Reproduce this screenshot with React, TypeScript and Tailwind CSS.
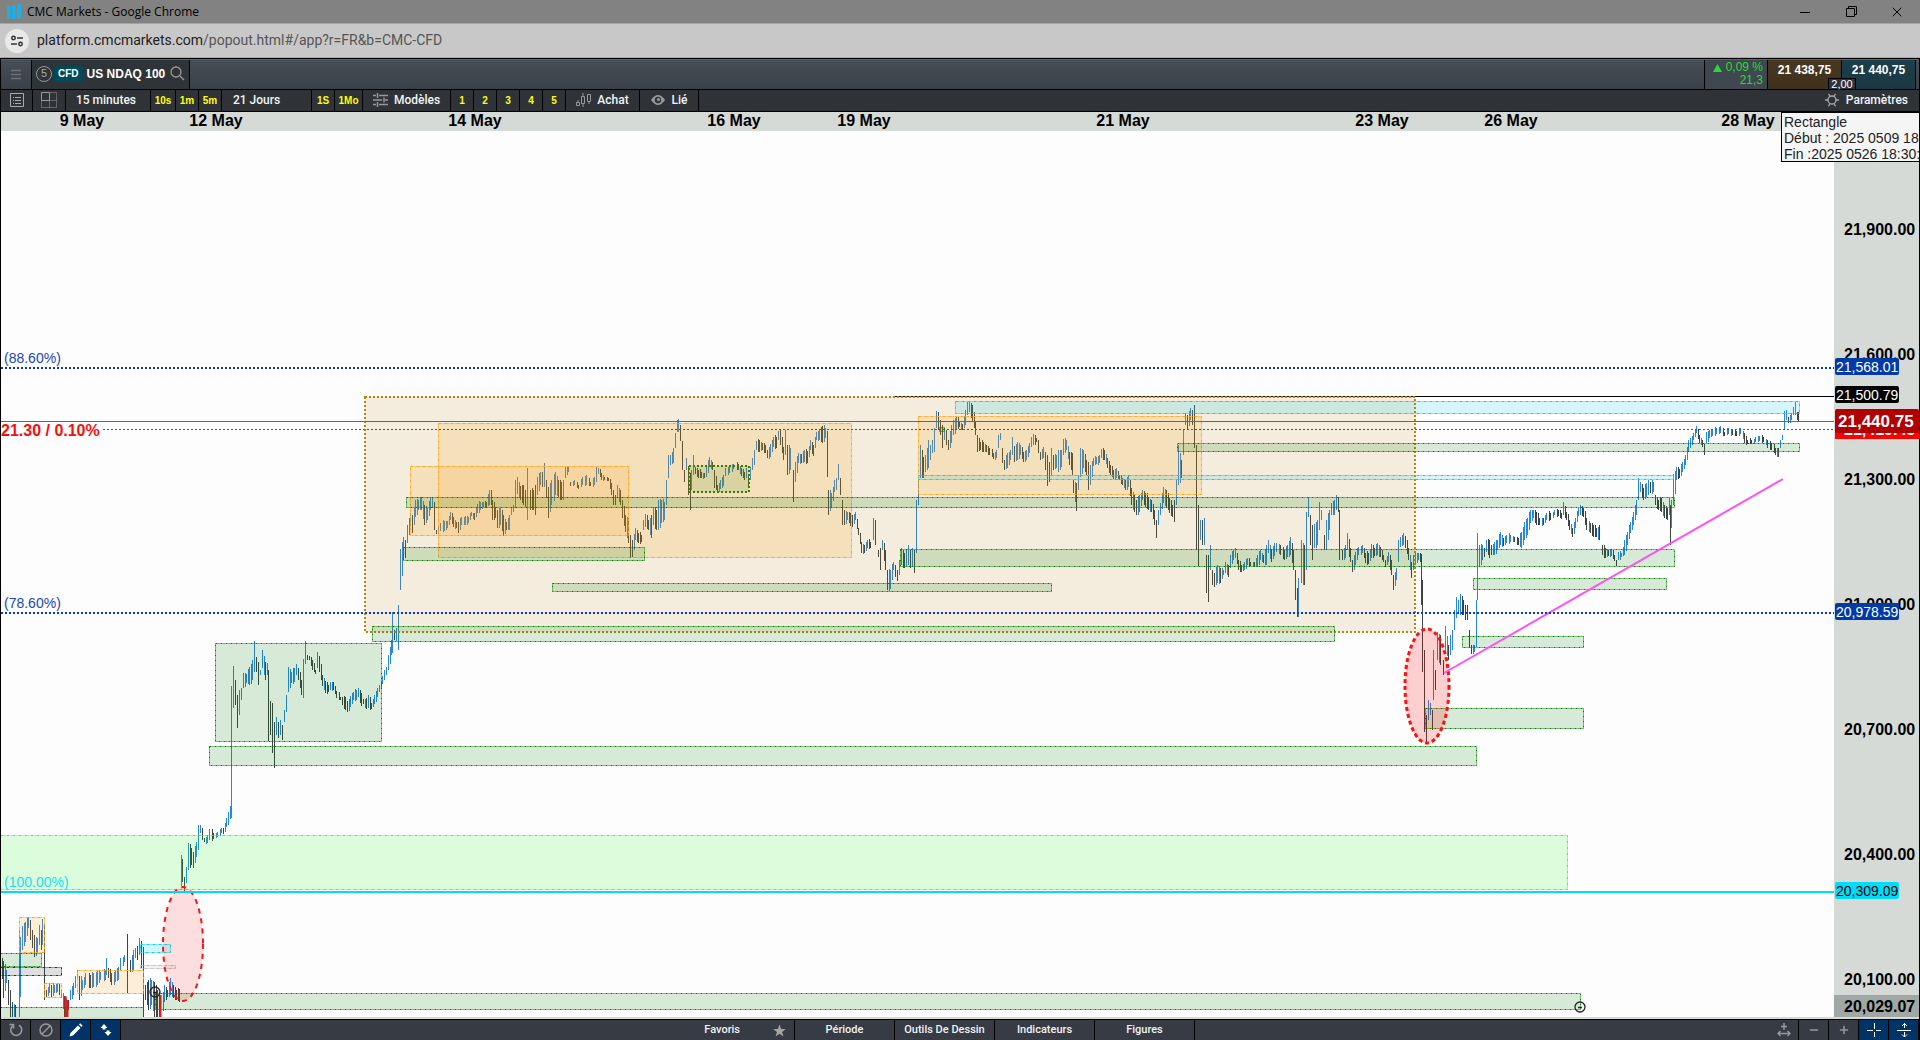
import type { ReactNode } from "react";
import { Minus, Plus, X } from "lucide-react";
import clsx from "clsx";

export default function App() {
  return (
    <div className="flex h-screen min-h-[600px] flex-col overflow-hidden bg-black font-['Liberation_Sans',Arial,sans-serif]">
      <TitleBar />
      <AddressBar />
      <main className="flex min-h-0 flex-1 flex-col border-t border-black px-px">
        <ProductHeader />
        <ChartToolbar />
        <section className="relative flex min-h-0 flex-1 bg-[#fdfdfd]">
          <Plot />
          <PriceAxis />
          <div className="absolute right-0 top-0 h-[50px] w-[138px] overflow-hidden whitespace-nowrap border border-r-0 border-black bg-[#f5f5f5] pl-[2px] pt-px text-[14px] leading-[16px] text-[#222]">
            <div>Rectangle</div>
            <div>Début : 2025 0509 18:30:00</div>
            <div>Fin :2025 0526 18:30:00</div>
          </div>
        </section>
        <BottomBar />
      </main>
    </div>
  );
}

function TitleBar() {
  return (
    <header className="flex h-6 shrink-0 items-center border-b border-[#a5a5a5] bg-[#828282] pl-[7px] text-black">
      <svg width="14" height="16" viewBox="0 0 14 16" fill="#1ab0e8">
        <path d="M0 1.5 3.500 2.500v12H0zM5 1.500 8.500 1v14H5zM10 0.500 14 0v14l-4 1z" />
      </svg>
      <h1 className="ml-[6px] flex-1 font-['Open_Sans',sans-serif] text-[12px]">CMC Markets - Google Chrome</h1>
      <button aria-label="Réduire" className="flex h-full w-[46px] items-center justify-center">
        <svg width="10" height="10" stroke="currentColor">
          <path d="M0 5.5h10" />
        </svg>
      </button>
      <button aria-label="Restaurer" className="flex h-full w-[46px] items-center justify-center">
        <svg width="11" height="11" fill="none" stroke="currentColor">
          <path d="M0.5 2.5h8v8h-8zM2.5 2.5v-2h8v8h-2" />
        </svg>
      </button>
      <button aria-label="Fermer" className="flex h-full w-[46px] items-center justify-center">
        <X size={16} strokeWidth={1.5} />
      </button>
    </header>
  );
}

function AddressBar() {
  return (
    <div className="flex h-[34px] shrink-0 items-center border-b border-[#aaa] bg-[#c8c8c8] pl-[5px]">
      <span className="flex h-6 w-6 items-center justify-center rounded-full bg-[#e9e9e9]">
        <svg width="12" height="12" fill="none" stroke="#333" strokeWidth="1.5">
          <circle cx="2.5" cy="3" r="1.7" />
          <path d="M6 3h6M0 9h6" />
          <circle cx="9.5" cy="9" r="1.7" />
        </svg>
      </span>
      <div className="ml-2 font-[Roboto,sans-serif] text-[14px] text-[#555]">
        <span className="text-[#222]">platform.cmcmarkets.com</span>/popout.html#/app?r=FR&b=CMC-CFD
      </div>
    </div>
  );
}

function ProductHeader() {
  return (
    <div className="flex h-[30px] shrink-0 border-t border-[#5b656f] bg-gradient-to-b from-[#464e57] to-[#3a4048] text-[12px]">
      <button aria-label="Menu" className="flex w-[31px] items-center justify-center border-r border-black">
        <svg width="10" height="11" stroke="#6b7279" strokeWidth="1.5">
          <path d="M0 1.5h10M0 5.5h10M0 9.5h10" />
        </svg>
      </button>
      <div className="flex w-[158px] items-center border-r border-black bg-[#2f3438] pb-[2px] pl-1 font-bold text-white">
        <span className="flex h-4 w-4 items-center justify-center rounded-full border border-[#999] text-[11px] font-normal text-[#aaa]">
          5
        </span>
        <span className="ml-[2px] rounded-[3px] bg-[#004b57] px-1 text-[10px] leading-4">CFD</span>
        <span className="ml-1">US NDAQ 100</span>
        <button aria-label="Rechercher" className="ml-[5px]">
          <svg width="15" height="15" fill="none" stroke="#999" strokeWidth="1.3">
            <circle cx="6" cy="6" r="5" />
            <path d="M10 10l4 4" />
          </svg>
        </button>
      </div>
      <div className="flex-1" />
      <div className="w-[64px] border-x border-black bg-[#40474f] pr-1 text-right leading-[13px] text-[#22dd3a]">
        <div className="flex items-center justify-end gap-1 pt-px">
          <svg width="9" height="8" fill="#22dd3a">
            <path d="M4.500 0 9 8H0z" />
          </svg>
          0,09 %
        </div>
        <div>21,3</div>
      </div>
      <button className="w-[74px] border-r border-black bg-gradient-to-b from-[#483822] to-[#3f301d] pb-[10px] font-bold text-white">
        21 438,75
      </button>
      <button className="relative w-[74px] border-r border-black bg-gradient-to-b from-[#1b3f4b] to-[#1b3842] pb-[10px] font-bold text-white">
        21 440,75
        <span className="absolute -left-[14px] bottom-0 w-[28px] border border-b-0 border-black bg-[#2f343c] text-[11px] font-normal leading-[10px]">
          2,00
        </span>
      </button>
      <div className="w-[3px]" />
    </div>
  );
}

function ToolCell({ className, children, label }: { className: string; children: ReactNode; label?: string }) {
  return (
    <button
      aria-label={label}
      className={clsx("flex shrink-0 items-center justify-center border-r border-black pb-px", className)}
    >
      {children}
    </button>
  );
}

const yellow = "font-['Liberation_Sans',Arial,sans-serif] text-[10px] font-bold text-[#ffff00]";
const label = "font-[Roboto,sans-serif] text-[12px] font-medium text-[#f0f3f5]";

function ChartToolbar() {
  return (
    <div className="flex h-[23px] shrink-0 border-y border-black bg-[#2f3337]">
      <ToolCell className="w-8" label="Liste">
        <svg width="14" height="14" fill="none" stroke="#aaa">
          <path d="M0.500 0.500h13v13h-13zM3 4.500h1M5 4.500h6M3 7.500h1M5 7.500h6M3 10.500h1M5 10.500h6" />
        </svg>
      </ToolCell>
      <ToolCell className="w-[33px]" label="Disposition">
        <svg width="16" height="16" fill="none" stroke="#999">
          <path d="M0.500 0.500h8v8h-8z" />
          <path d="M8.500 0.500h7v15h-15v-7M8.500 8.500h7M8.500 8.500v7" strokeDasharray="1 1" />
        </svg>
      </ToolCell>
      <ToolCell className={clsx("w-[85px] pr-1", label)}>15 minutes</ToolCell>
      <ToolCell className={clsx("w-[25px]", yellow)}>10s</ToolCell>
      <ToolCell className={clsx("w-[23px]", yellow)}>1m</ToolCell>
      <ToolCell className={clsx("w-[23px]", yellow)}>5m</ToolCell>
      <ToolCell className={clsx("w-[90px] pr-5", label)}>21 Jours</ToolCell>
      <ToolCell className={clsx("w-[23px]", yellow)}>1S</ToolCell>
      <ToolCell className={clsx("w-[28px]", yellow)}>1Mo</ToolCell>
      <ToolCell className={clsx("w-[88px] gap-[6px]", label)}>
        <svg width="15" height="14" stroke="#999" strokeWidth="1.500">
          <path d="M0 2.500h3M6 2.500h9M4.500 0v5M0 7h9M12 7h3M11 4.500v5M0 11.500h3M6 11.500h9M4.500 9v5" />
        </svg>
        Modèles
      </ToolCell>
      {["1", "2", "3", "4", "5"].map((n) => (
        <ToolCell key={n} className={clsx("w-[23px]", yellow)}>
          {n}
        </ToolCell>
      ))}
      <ToolCell className={clsx("w-[74px] gap-[6px]", label)}>
        <svg width="15" height="14" fill="none" stroke="#999">
          <path d="M0.500 9.500h3v3h-3zM2 9V7M5.500 3.500h3v7h-3zM7 3V0M7 11v3M11.500 1.500h3v7h-3zM13 9v2" />
        </svg>
        Achat
      </ToolCell>
      <ToolCell className={clsx("w-[59px] gap-[7px]", label)}>
        <svg width="14" height="10" viewBox="0 0 14 10">
          <path d="M0 5Q7-5 14 5Q7 15 0 5z" fill="#999" />
          <circle cx="7" cy="5" r="3.200" fill="#2f3337" />
          <circle cx="7.500" cy="4.500" r="1.600" fill="#999" />
        </svg>
        Lié
      </ToolCell>
      <div className="flex-1" />
      <button className={clsx("flex items-center gap-[7px] pb-px pr-[11px]", label)}>
        <svg width="14" height="14" viewBox="0 0 14 14" fill="none" stroke="#aaa" strokeWidth="1.300">
          <circle cx="7" cy="7" r="4" />
          <path d="M3.500 0.800 5 3.500M10.500 0.800 9 3.500M0 7h3M11 7h3M3.500 13.200 5 10.500M10.500 13.200 9 10.500" />
        </svg>
        Paramètres
      </button>
    </div>
  );
}

function BarCell({ label, active, children }: { label: string; active?: boolean; children: ReactNode }) {
  return (
    <button
      aria-label={label}
      className={clsx("flex w-[30px] items-center justify-center border-r border-black", active ? "bg-[#003366] text-white" : "text-[#999]")}
    >
      {children}
    </button>
  );
}

function BottomBar() {
  return (
    <footer className="flex h-[21px] shrink-0 border-t border-black bg-[#373b43] font-[Roboto,sans-serif] text-[11px] font-medium text-[#f0f3f5]">
      <BarCell label="Réinitialiser">
        <svg width="14" height="14" fill="none" stroke="currentColor" strokeWidth="1.600">
          <path d="M4 2.500A5.500 5.500 0 1 0 10 2.200" />
          <path d="M0.500 1.500h4v4" />
        </svg>
      </BarCell>
      <BarCell label="Interdire">
        <svg width="14" height="14" fill="none" stroke="currentColor" strokeWidth="1.500">
          <circle cx="7" cy="7" r="6" />
          <path d="M3 11l8-8" />
        </svg>
      </BarCell>
      <BarCell label="Dessiner" active>
        <svg width="14" height="14" fill="currentColor">
          <path d="M0.500 13.500 1.500 10 9 2.500l2.500 2.500L4 12.500zM10 1.500l1.200-1.200 2.500 2.500L12.500 4z" />
        </svg>
      </BarCell>
      <BarCell label="Trier" active>
        <svg width="12" height="12" fill="currentColor">
          <path d="M4 0l3.500 4H5.500v1.500h-3V4H0.500zM8 12 4.500 8h2V6.500h3V8h2z" />
        </svg>
      </BarCell>
      <nav className="flex flex-1 justify-center">
        <button className="relative w-[100px] border-r border-black pr-[54px] text-right">
          Favoris
          <svg className="absolute right-2 top-1" width="13" height="13" viewBox="0 0 13 13" fill="#a5a5a5">
            <path d="M6.500 0.500 8.100 4.900 12.700 5 9.100 7.900 10.400 12.400 6.500 9.800 2.600 12.400 3.900 7.900 0.300 5 4.900 4.900z" />
          </svg>
        </button>
        {["Période", "Outils De Dessin", "Indicateurs", "Figures"].map((t) => (
          <button key={t} className="w-[100px] border-r border-black">
            {t}
          </button>
        ))}
      </nav>
      <BarCell label="Ajuster">
        <svg width="14" height="14" fill="none" stroke="currentColor" strokeWidth="1.500">
          <path d="M7 0v7M4 3.500h6M1 10.500h12M3.500 8 1 10.500 3.500 13M10.500 8l2.500 2.500L10.500 13" />
        </svg>
      </BarCell>
      <BarCell label="Dézoomer">
        <Minus size={12} strokeWidth={3} />
      </BarCell>
      <BarCell label="Zoomer">
        <Plus size={12} strokeWidth={3} />
      </BarCell>
      <BarCell label="Réticule" active>
        <svg width="14" height="14" stroke="currentColor">
          <path d="M7.500 0v6M7.500 9v5M0 7.500h6M9 7.500h5" />
        </svg>
      </BarCell>
      <BarCell label="Échelle" active>
        <svg width="14" height="14" fill="none" stroke="currentColor">
          <path d="M0 7.500h14M7.500 0v5M7.500 9v5M5 3l2.500-2.500L10 3M5 11.500 7.500 14l2.500-2.500" />
        </svg>
      </BarCell>
    </footer>
  );
}

const tones = {
  gold: { fill: "#b8860b", opacity: 0.13, stroke: "#b8860b", width: 2, dash: "2 2" },
  orange: { fill: "#ff9900", opacity: 0.15, stroke: "#ffa519", width: 1, dash: "3 1 1 1" },
  green: { fill: "#008000", opacity: 0.15, stroke: "#008000", width: 1, dash: "2 1 1 1" },
  olive: { fill: "#338000", opacity: 0.14, stroke: "#338000", width: 2, dash: "2 2" },
  cyan: { fill: "#00d0f0", opacity: 0.16, stroke: "#00d5f0", width: 1, dash: "3 1 1 1" },
  lime: { fill: "#00ff00", opacity: 0.13, stroke: "#50f050", width: 1, dash: "3 1 1 1" },
  gray: { fill: "#333333", opacity: 0.15, stroke: "#333333", width: 1, dash: "3 1 1 1" },
  light: { fill: "#999999", opacity: 0.1, stroke: "#bbbbbb", width: 1, dash: "3 1 1 1" },
};

// left, top, right, bottom
const zones: [keyof typeof tones, number, number, number, number][] = [
  ["gold", 365, 397, 1415, 632],
  ["lime", 0, 835, 1567, 889],
  ["green", 215, 643, 381, 741],
  ["green", 209, 746, 1476, 765],
  ["orange", 438, 423, 851, 557],
  ["orange", 410, 466, 628, 535],
  ["orange", 918, 416, 1201, 494],
  ["olive", 689, 466, 749, 492],
  ["green", 406, 497, 1674, 507],
  ["green", 403, 547, 644, 560],
  ["green", 552, 583, 1051, 591],
  ["green", 372, 626, 1334, 641],
  ["green", 900, 549, 1674, 566],
  ["green", 1177, 443, 1799, 451],
  ["green", 939, 427, 944, 431],
  ["green", 1473, 578, 1666, 589],
  ["green", 1462, 636, 1583, 647],
  ["green", 1425, 708, 1583, 728],
  ["cyan", 955, 401, 1799, 413],
  ["cyan", 918, 475, 1673, 479],
  ["orange", 19, 917, 44, 952],
  ["green", 0, 953, 41, 966],
  ["gray", 0, 967, 61, 975],
  ["orange", 44, 983, 61, 997],
  ["orange", 77, 970, 143, 993],
  ["green", 0, 1007, 143, 1030],
  ["cyan", 140, 944, 170, 952],
  ["light", 140, 965, 175, 968],
  ["green", 155, 993, 1580, 1009],
];

// x,high,low for each bar
const bars = `
2,958,979 3,961,998 6,970,983 8,980,1005 10,990,1017 12,1002,1017 15,1005,1017 19,930,1017 20,937,997 22,926,950 25,922,942 28,917,928 30,920,940 32,930,948
34,935,957 37,938,953 39,925,945 41,930,950 42,919,945 44,923,1000 46,990,997 49,983,993 51,985,997 54,985,993 57,983,992 59,984,995 61,990,998 64,996,1017 66,998,1010
68,1000,1010 70,990,1000 73,983,995 75,976,988 77,970,980 79,976,1000 82,980,990 85,973,985 90,975,988 93,973,987 97,970,985 100,972,980 105,970,980 106,958,975
108,968,978 111,973,985 115,970,982 118,967,980 120,958,970 124,955,962 127,934,993 130,960,972 133,950,970 135,948,958 137,946,960 139,938,955 141,941,968 143,947,1017
145,985,1000 148,980,1010 151,980,1005 154,982,1017 157,990,1017 160,998,1017 164,985,1002 167,990,997 170,978,995 173,985,998 176,990,1000 179,989,1002
181,855,886 182,859,882 184,877,893 186,867,883 188,843,870 191,848,865 193,852,868 196,842,857 198,825,850 200,825,833 202,828,840 204,838,842 207,835,843 209,829,840
213,833,839 217,832,837 221,828,833 223,828,834 226,818,827 228,812,825 230,806,819 231,686,818 233,666,708 235,680,705 237,695,728 239,690,715 241,688,700 243,673,688
246,674,683 249,667,685 252,660,680 254,641,672 256,657,672 258,662,685 260,670,675 262,650,668 265,662,680 267,663,675 268,670,741 270,701,735 272,703,753 274,722,768
276,717,735 278,722,738 280,720,735 282,725,740 284,710,722 286,695,712 288,667,692 291,672,683 294,668,682 296,664,675 298,668,680 301,680,695 303,659,698 305,641,664
307,655,660 309,656,660 312,660,670 315,670,674 317,652,668 319,656,672 322,675,686 325,681,693 328,685,692 330,682,690 333,682,690 336,691,698 340,697,700 342,697,705
345,697,710 347,701,712 350,696,707 353,692,700 356,690,700 358,688,697 361,693,706 363,699,704 366,698,709 368,695,708 371,703,709 374,695,704 377,688,697 379,685,692
382,676,684 384,670,680 386,667,675 388,655,670 391,640,655 392,612,653 394,630,640 396,628,641 398,605,650 400,549,590 403,537,560 405,540,558 407,525,543 410,513,526
412,515,533 415,500,517 418,500,510 421,497,510 424,505,525 427,508,520 430,497,510 432,498,508 434,502,530 436,530,534 438,525,534 440,523,531 444,521,531 447,521,528
450,512,520 453,517,527 456,522,528 458,522,533 461,517,525 465,516,525 468,517,523 471,512,516 474,513,520 477,504,513 480,502,510 483,502,507 486,502,507 489,490,505
491,490,505 492,500,520 495,507,518 497,510,528 500,508,525 503,515,536 506,522,530 509,515,530 511,507,515 513,505,512 515,480,508 517,477,494 520,486,500 523,485,505
525,490,507 527,468,520 530,490,510 533,490,510 535,485,515 537,477,495 540,472,485 542,472,487 544,463,487 546,480,498 548,487,518 551,480,505 555,472,495 558,480,497
561,482,500 563,480,500 565,467,478 568,467,472 570,482,486 574,480,485 578,485,489 582,477,485 586,475,485 590,482,486 594,477,485 596,467,482 598,468,474 601,473,480
604,477,480 608,478,481 611,483,495 613,490,505 615,495,505 617,485,497 620,490,505 622,500,518 625,515,532 628,518,543 630,535,558 632,540,557 635,528,540 638,533,543
641,535,542 643,520,530 645,514,527 648,520,530 651,515,538 653,507,525 656,510,530 658,500,530 661,500,523 664,502,520 666,480,505 668,455,478 670,455,465 673,448,463
675,433,448 677,420,432 678,419,432 680,425,441 682,441,470 684,470,482 686,458,470 688,466,495 690,473,510 691,470,490 693,455,475 695,467,474 698,470,478 701,472,478
704,473,478 706,467,477 709,457,467 712,462,470 714,470,488 717,485,492 720,480,489 723,475,486 725,468,476 729,466,473 733,464,469 738,464,470 741,468,476 744,472,480
746,468,478 748,475,487 750,467,480 752,458,470 754,450,465 756,441,450 759,440,452 762,443,450 765,445,453 767,450,458 770,444,457 773,437,447 776,437,448 778,431,440
780,430,445 783,447,460 785,430,455 787,445,475 790,448,470 793,470,502 795,462,482 798,453,463 801,454,463 804,450,462 807,451,463 810,440,450 813,445,456 816,432,440
819,429,440 822,426,443 825,428,438 827,431,477 828,490,515 831,493,507 834,480,492 836,478,490 838,464,480 840,478,495 842,500,525 844,510,525 847,512,520 850,513,526
852,515,527 855,512,520 858,528,535 861,542,553 864,545,553 867,540,548 870,542,548 873,518,540 875,520,545 878,550,557 880,548,570 882,540,550 885,550,570 887,570,590
890,570,589 893,562,570 895,565,577 897,570,581 899,560,575 901,548,565 904,553,568 906,550,567 908,545,565 910,550,568 912,548,567 914,550,573 916,500,553 918,480,505
920,445,478 923,457,478 925,455,472 928,440,468 930,445,460 932,440,453 934,428,452 936,411,428 938,412,430 940,420,435 942,425,448 944,430,440 946,430,445 948,440,450
951,425,443 953,420,435 956,417,430 959,421,427 962,424,430 965,410,425 967,402,415 969,402,412 972,405,421 975,422,435 977,435,452 980,442,450 983,442,452 986,445,452
989,448,455 993,453,459 996,450,458 998,435,448 1000,433,440 1002,448,463 1004,460,470 1007,453,468 1010,450,460 1012,437,455 1014,446,462 1017,442,460 1020,445,455
1023,452,462 1026,450,460 1029,443,453 1031,437,447 1033,434,445 1036,438,442 1038,440,453 1040,452,460 1043,447,458 1045,452,470 1047,455,486 1049,462,482 1051,448,475
1053,455,470 1056,455,468 1058,450,472 1061,450,467 1063,439,455 1066,440,450 1069,452,465 1072,453,475 1073,480,493 1076,483,511 1078,475,490 1080,448,477 1083,450,468
1086,460,475 1088,462,490 1090,465,485 1093,458,466 1096,457,464 1099,455,463 1101,449,458 1104,450,460 1107,458,468 1110,465,475 1113,470,479 1116,468,478 1119,475,480
1122,478,485 1125,480,490 1128,475,487 1131,488,505 1134,495,512 1136,500,515 1139,495,512 1142,490,500 1145,493,507 1148,497,510 1151,500,512 1154,510,525 1156,520,538
1158,510,525 1160,503,515 1163,487,503 1166,490,507 1169,498,513 1172,505,517 1174,500,522 1176,480,505 1178,445,485 1181,460,478 1183,430,455 1185,413,425 1187,415,430
1190,408,420 1192,410,425 1194,405,448 1196,445,550 1198,505,566 1200,520,540 1202,520,545 1204,518,545 1206,555,593 1208,555,602 1210,545,570 1212,570,585 1214,573,587
1217,565,583 1220,568,583 1223,570,575 1225,562,573 1228,565,577 1230,555,568 1233,550,560 1235,548,558 1238,560,570 1241,565,572 1244,562,570 1247,558,565 1250,562,566
1254,562,566 1257,555,567 1260,550,560 1263,555,563 1266,545,565 1268,540,553 1271,550,562 1274,543,556 1276,543,552 1280,545,555 1284,550,560 1287,545,557 1290,537,555
1293,550,570 1295,570,600 1297,588,617 1298,578,617 1301,540,583 1304,545,585 1306,512,570 1308,497,517 1310,515,545 1312,525,560 1314,524,548 1317,520,545 1319,502,530
1321,510,520 1324,535,550 1326,520,550 1329,510,530 1331,503,515 1334,500,515 1336,495,510 1338,497,512 1339,510,560 1342,550,560 1345,545,558 1347,533,550 1350,548,562
1352,560,572 1355,552,565 1358,547,555 1362,545,553 1365,553,563 1368,553,564 1371,544,558 1374,548,556 1377,543,555 1380,547,557 1383,555,562 1385,560,567 1388,552,562
1391,560,575 1393,575,590 1396,568,580 1398,540,562 1400,537,547 1403,533,545 1405,536,548 1408,548,560 1411,562,578 1413,555,570 1415,552,565 1418,553,560 1420,553,562
1421,554,605 1422,580,672 1424,650,732 1426,715,742 1428,700,720 1430,703,715 1432,710,730 1433,650,700 1435,670,690 1437,632,660 1440,635,665 1443,660,675 1445,626,650
1448,645,660 1450,635,655 1452,630,650 1454,610,630 1456,597,618 1458,600,612 1460,594,615 1463,600,615 1465,605,620 1467,605,620 1469,630,648 1471,645,654 1474,645,652
1476,600,647 1477,533,600 1479,545,567 1482,545,560 1484,548,557 1486,540,552 1489,540,558 1491,545,555 1494,542,555 1497,540,550 1500,532,545 1503,538,546 1506,535,543
1510,535,542 1514,537,542 1518,538,545 1521,532,548 1524,522,540 1527,518,535 1530,510,523 1533,510,518 1536,512,525 1539,518,525 1543,518,525 1546,513,520 1550,513,520
1554,510,515 1558,510,516 1561,513,519 1563,502,515 1566,512,520 1569,520,530 1572,528,537 1575,518,528 1578,508,516 1580,505,515 1583,508,517 1586,518,530 1590,523,533
1593,525,537 1596,528,537 1599,525,540 1602,545,555 1605,548,558 1608,550,556 1611,549,556 1614,555,561 1616,560,566 1618,552,560 1621,553,557 1624,540,555 1627,532,545
1630,522,533 1633,512,525 1636,500,515 1638,478,500 1640,482,492 1643,488,500 1646,483,497 1648,480,495 1650,482,493 1653,482,492 1655,495,505 1658,500,510 1661,498,512
1664,505,518 1667,508,520 1669,498,515 1670,505,545 1671,500,528 1673,474,505 1676,467,480 1679,469,478 1682,462,472 1685,455,465 1688,440,452 1690,438,448 1693,433,440
1696,426,433 1699,435,443 1702,440,447 1704,444,455 1706,432,443 1709,430,438 1712,430,436 1716,428,434 1720,426,433 1724,432,436 1728,428,434 1732,430,435 1736,431,436
1740,428,434 1744,433,443 1747,440,444 1751,440,444 1755,437,442 1759,436,441 1763,437,442 1767,440,448 1771,443,450 1775,448,455 1778,448,457 1780,440,448 1782,435,440
1784,411,430 1786,410,420 1788,417,423 1791,413,420 1793,407,415 1795,402,415 1797,412,420 1798,412,421`
  .trim()
  .split(/\s+/)
  .map((b) => b.split(",").map(Number));

// rising bars are blue, falling ones dark; wide gaps get a bar in between
let rising = "";
let falling = "";
bars.forEach(([x, high, low], i) => {
  const prev = bars[i - 1] ?? [x - 1, high, low];
  const up = high + low < prev[1] + prev[2];
  const d = `M${x}.5 ${high}V${low}`;
  if (up) rising += d;
  else falling += d;
  if (x - prev[0] > 2 && Math.abs(high - prev[1]) < 20) {
    const mid = `M${x - 1}.5 ${Math.round((high + prev[1]) / 2) - (i % 3)}V${Math.round((low + prev[2]) / 2) + (i % 2)}`;
    if (up || i % 3 === 0) rising += mid;
    else falling += mid;
  }
});

const dates: [string, number][] = [
  ["9 May", 82],
  ["12 May", 216],
  ["14 May", 475],
  ["16 May", 734],
  ["19 May", 864],
  ["21 May", 1123],
  ["23 May", 1382],
  ["26 May", 1511],
  ["28 May", 1748],
];

// Drawn in window coordinates; the chart starts 1px in and 112px down.
function Plot() {
  return (
    <div className="min-w-0 flex-1 overflow-hidden">
      <svg className="block h-full w-full" fontFamily="'Liberation Sans', Arial, sans-serif">
        <rect width="100%" height="19" fill="#d5dad6" />
        <g transform="translate(-1 -112)">
          <g fontSize="16" fontWeight="bold" textAnchor="middle">
            {dates.map(([t, x]) => (
              <text key={t} x={x} y="126">
                {t}
              </text>
            ))}
          </g>
          <path d={rising} stroke="#2986de" />
          <path d={falling} stroke="#3b4345" />
          <path d="M65.500 996v21M67.500 1000v17M160.500 995v22" stroke="#f01818" strokeWidth="2" />
          <path d="M893 396.500H1840" stroke="#000" />
          {zones.map(([tone, x1, y1, x2, y2], i) => {
            const t = tones[tone];
            const o = t.width === 1 ? 0.5 : 0;
            return (
              <rect
                key={i}
                x={x1 + o}
                y={y1 + o}
                width={x2 - x1}
                height={y2 - y1}
                fill={t.fill}
                fillOpacity={t.opacity}
                stroke={t.stroke}
                strokeWidth={t.width}
                strokeDasharray={t.dash}
              />
            );
          })}
          <g fill="#ff0000" fillOpacity="0.12" stroke="#ff1010">
            <ellipse cx="183" cy="944" rx="20" ry="57" strokeWidth="2" strokeDasharray="5 5" />
            <ellipse cx="1427" cy="686" rx="22" ry="57" strokeWidth="3" strokeDasharray="4 3" fillOpacity="0.18" />
          </g>
          <path d="M1444 673 1783 479" stroke="#ff50f5" strokeWidth="2" />
          <path d="M1 368H1840M1 613H1840" stroke="#0a3ca8" strokeWidth="2" strokeDasharray="2 2" />
          <path d="M1 892H1840" stroke="#00dcf5" strokeWidth="2" />
          <path d="M1 421.500H1840" stroke="#f03018" />
          <path d="M103 429.500H1840" stroke="#f01010" strokeDasharray="2 2" />
          <g fill="none" stroke="#222" strokeWidth="1.300">
            <circle cx="155" cy="992" r="5" />
            <path d="M153 992.500h4M1578 1007.500h4" />
            <circle cx="1580" cy="1007" r="5" />
          </g>
          <g fontSize="14">
            <text x="4" y="363" fill="#1a48b0">(88.60%)</text>
            <text x="4" y="608" fill="#1a48b0">(78.60%)</text>
            <text x="4" y="887" fill="#20dce8">(100.00%)</text>
          </g>
          <text x="1" y="436" fontSize="16" fontWeight="bold" fill="#f51010">21.30 / 0.10%</text>
        </g>
        <rect y="905" width="100%" height="2" fill="#d5dad6" />
      </svg>
    </div>
  );
}

const ticks: [string, number][] = [
  ["21,900.00", 229],
  ["21,600.00", 354],
  ["21,300.00", 479],
  ["21,000.00", 604],
  ["20,700.00", 729],
  ["20,400.00", 854],
  ["20,100.00", 979],
];

const tags: [string, number, string, string][] = [
  ["21,568.01", 367, "#003aa8", "#fff"],
  ["21,500.79", 395, "#000", "#fff"],
  ["20,978.59", 612, "#003aa8", "#fff"],
  ["20,309.09", 891, "#00dcfa", "#000"],
];

function PriceAxis() {
  return (
    <div className="w-[85px] shrink-0 overflow-hidden bg-[#d5dad6]">
      <svg className="block h-full w-full" fontFamily="'Liberation Sans', Arial, sans-serif">
        <g transform="translate(0 -112)">
          <rect y="995" width="85" height="22" fill="#9fa8a5" />
          <g fontSize="16" fontWeight="bold">
            {ticks.map(([t, y]) => (
              <text key={t} x="10" y={y + 6}>
                {t}
              </text>
            ))}
            <text x="10" y="1012">20,029.07</text>
          </g>
          {tags.map(([t, y, bg, fg]) => (
            <g key={t}>
              <rect x="1" y={y - 9} width="64" height="17" rx="2" fill={bg} />
              <text x="2" y={y + 5} fontSize="14" fill={fg}>
                {t}
              </text>
            </g>
          ))}
          <rect x="1" y="425" width="84" height="14" fill="#f00" />
          <text x="10" y="435" fontSize="16" fontWeight="bold" fill="#fff">21,419.45</text>
          <rect x="1" y="409" width="84" height="24" rx="2" fill="#b00000" />
          <text x="4" y="427" fontSize="17" fontWeight="bold" fill="#fff">21,440.75</text>
        </g>
      </svg>
    </div>
  );
}
